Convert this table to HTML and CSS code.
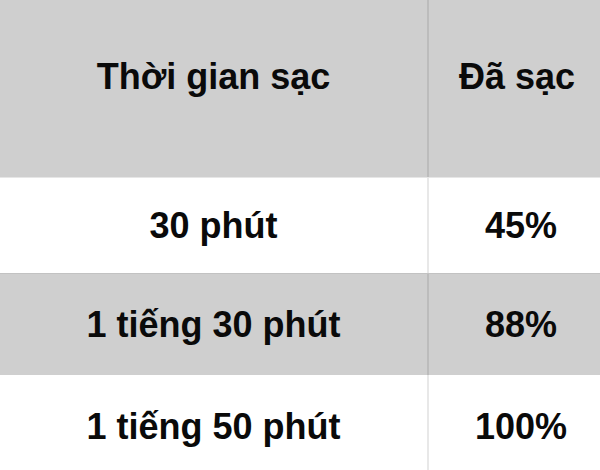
FILE: index.html
```html
<!DOCTYPE html>
<html lang="vi">
<head>
<meta charset="utf-8">
<title>Thời gian sạc</title>
<link rel="stylesheet" href="styles.css">
</head>
<body>
<div class="table">
  <div class="row head">
    <div class="cell c1">Thời gian sạc</div>
    <div class="cell c2">Đã sạc</div>
  </div>
  <div class="row r1">
    <div class="cell c1">30 phút</div>
    <div class="cell c2">45%</div>
  </div>
  <div class="row r2 shade">
    <div class="cell c1">1 tiếng 30 phút</div>
    <div class="cell c2">88%</div>
  </div>
  <div class="row r3">
    <div class="cell c1">1 tiếng 50 phút</div>
    <div class="cell c2">100%</div>
  </div>
</div>
</body>
</html>
```
FILE: styles.css
```css
html, body {
  margin: 0;
  padding: 0;
  background: #ffffff;
  overflow: hidden;
}

.table {
  width: 600px;
  font-family: "Liberation Sans", Arial, sans-serif;
  font-weight: bold;
  font-size: 36px;
  line-height: 36px;
  color: #0a0a0a;
}

.row {
  display: grid;
  grid-template-columns: 429px 171px;
}

.cell {
  display: flex;
  align-items: center;
  justify-content: center;
  white-space: nowrap;
}

.c1 {
  border-right: 2px solid rgba(0, 0, 0, 0.09);
}

.c2 {
  padding-left: 13px;
}

.head {
  height: 178px;
  background: #cfcfcf;
  border-bottom: 1px solid #e6e6e6;
  box-sizing: border-box;
}

.head .cell {
  padding-bottom: 24px;
}

.head .c2 {
  padding-left: 5px;
}

.r1 {
  height: 95px;
}

.shade {
  background: #cfcfcf;
  border-top: 1px solid #c2c2c2;
}

.r2 {
  height: 102px;
  box-sizing: border-box;
}

.r3 {
  height: 104px;
}
```
